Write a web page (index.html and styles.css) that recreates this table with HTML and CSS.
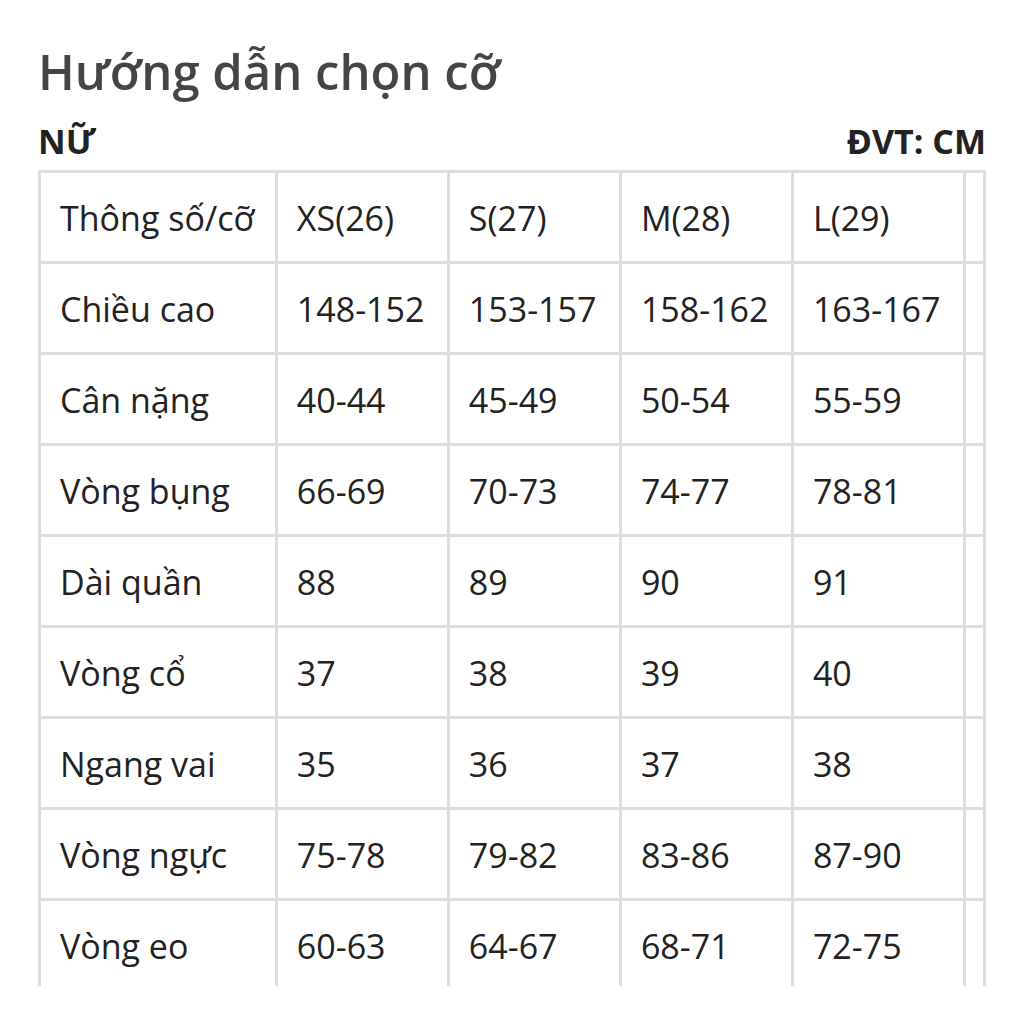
FILE: index.html
```html
<!DOCTYPE html>
<html lang="vi">
<head>
<meta charset="utf-8">
<title>Hướng dẫn chọn cỡ</title>
<link rel="stylesheet" href="styles.css">
</head>
<body>
<main class="page">
  <h1 class="title">Hướng dẫn chọn cỡ</h1>
  <div class="subhead">
    <span class="gender">NỮ</span>
    <span class="unit">ĐVT: CM</span>
  </div>
  <div class="table-wrap">
    <table class="size-table">
      <colgroup>
        <col class="c-label">
        <col class="c-size">
        <col class="c-size">
        <col class="c-size">
        <col class="c-size">
        <col class="c-size">
      </colgroup>
      <tbody>
        <tr><td>Thông số/cỡ</td><td>XS(26)</td><td>S(27)</td><td>M(28)</td><td>L(29)</td><td>XL(30)</td></tr>
        <tr><td>Chiều cao</td><td>148-152</td><td>153-157</td><td>158-162</td><td>163-167</td><td>168-172</td></tr>
        <tr><td>Cân nặng</td><td>40-44</td><td>45-49</td><td>50-54</td><td>55-59</td><td>60-64</td></tr>
        <tr><td>Vòng bụng</td><td>66-69</td><td>70-73</td><td>74-77</td><td>78-81</td><td>82-85</td></tr>
        <tr><td>Dài quần</td><td>88</td><td>89</td><td>90</td><td>91</td><td>92</td></tr>
        <tr><td>Vòng cổ</td><td>37</td><td>38</td><td>39</td><td>40</td><td>41</td></tr>
        <tr><td>Ngang vai</td><td>35</td><td>36</td><td>37</td><td>38</td><td>39</td></tr>
        <tr><td>Vòng ngực</td><td>75-78</td><td>79-82</td><td>83-86</td><td>87-90</td><td>91-94</td></tr>
        <tr><td>Vòng eo</td><td>60-63</td><td>64-67</td><td>68-71</td><td>72-75</td><td>76-79</td></tr>
      </tbody>
    </table>
  </div>
</main>
</body>
</html>
```

FILE: styles.css
```css
html, body {
  margin: 0;
  padding: 0;
  background: #ffffff;
}

body {
  font-family: "Open Sans", "Noto Sans", "DejaVu Sans", sans-serif;
  color: #222222;
}

.page {
  width: 948px;
  margin-left: 38px;
  padding-top: 35px;
}

.title {
  margin: 0;
  font-size: 49px;
  font-weight: 600;
  line-height: 72px;
  color: #454545;
}

.subhead {
  display: flex;
  justify-content: space-between;
  align-items: baseline;
  margin-top: 5px;
  font-size: 34px;
  font-weight: 700;
  line-height: 58px;
  color: #222222;
}

.table-wrap {
  box-sizing: border-box;
  width: 948px;
  height: 816px;
  overflow: hidden;
  border-right: 3px solid #dddddd;
}

.size-table {
  border-collapse: collapse;
  table-layout: fixed;
  width: 1100px;
}

.c-label { width: 232px; }
.c-size { width: 168.5px; }

.size-table td {
  border: 3px solid #dddddd;
  height: 86px;
  padding: 2px 0 0 19px;
  font-size: 34px;
  font-weight: 400;
  color: #222222;
  white-space: nowrap;
  vertical-align: middle;
  overflow: hidden;
}
```
